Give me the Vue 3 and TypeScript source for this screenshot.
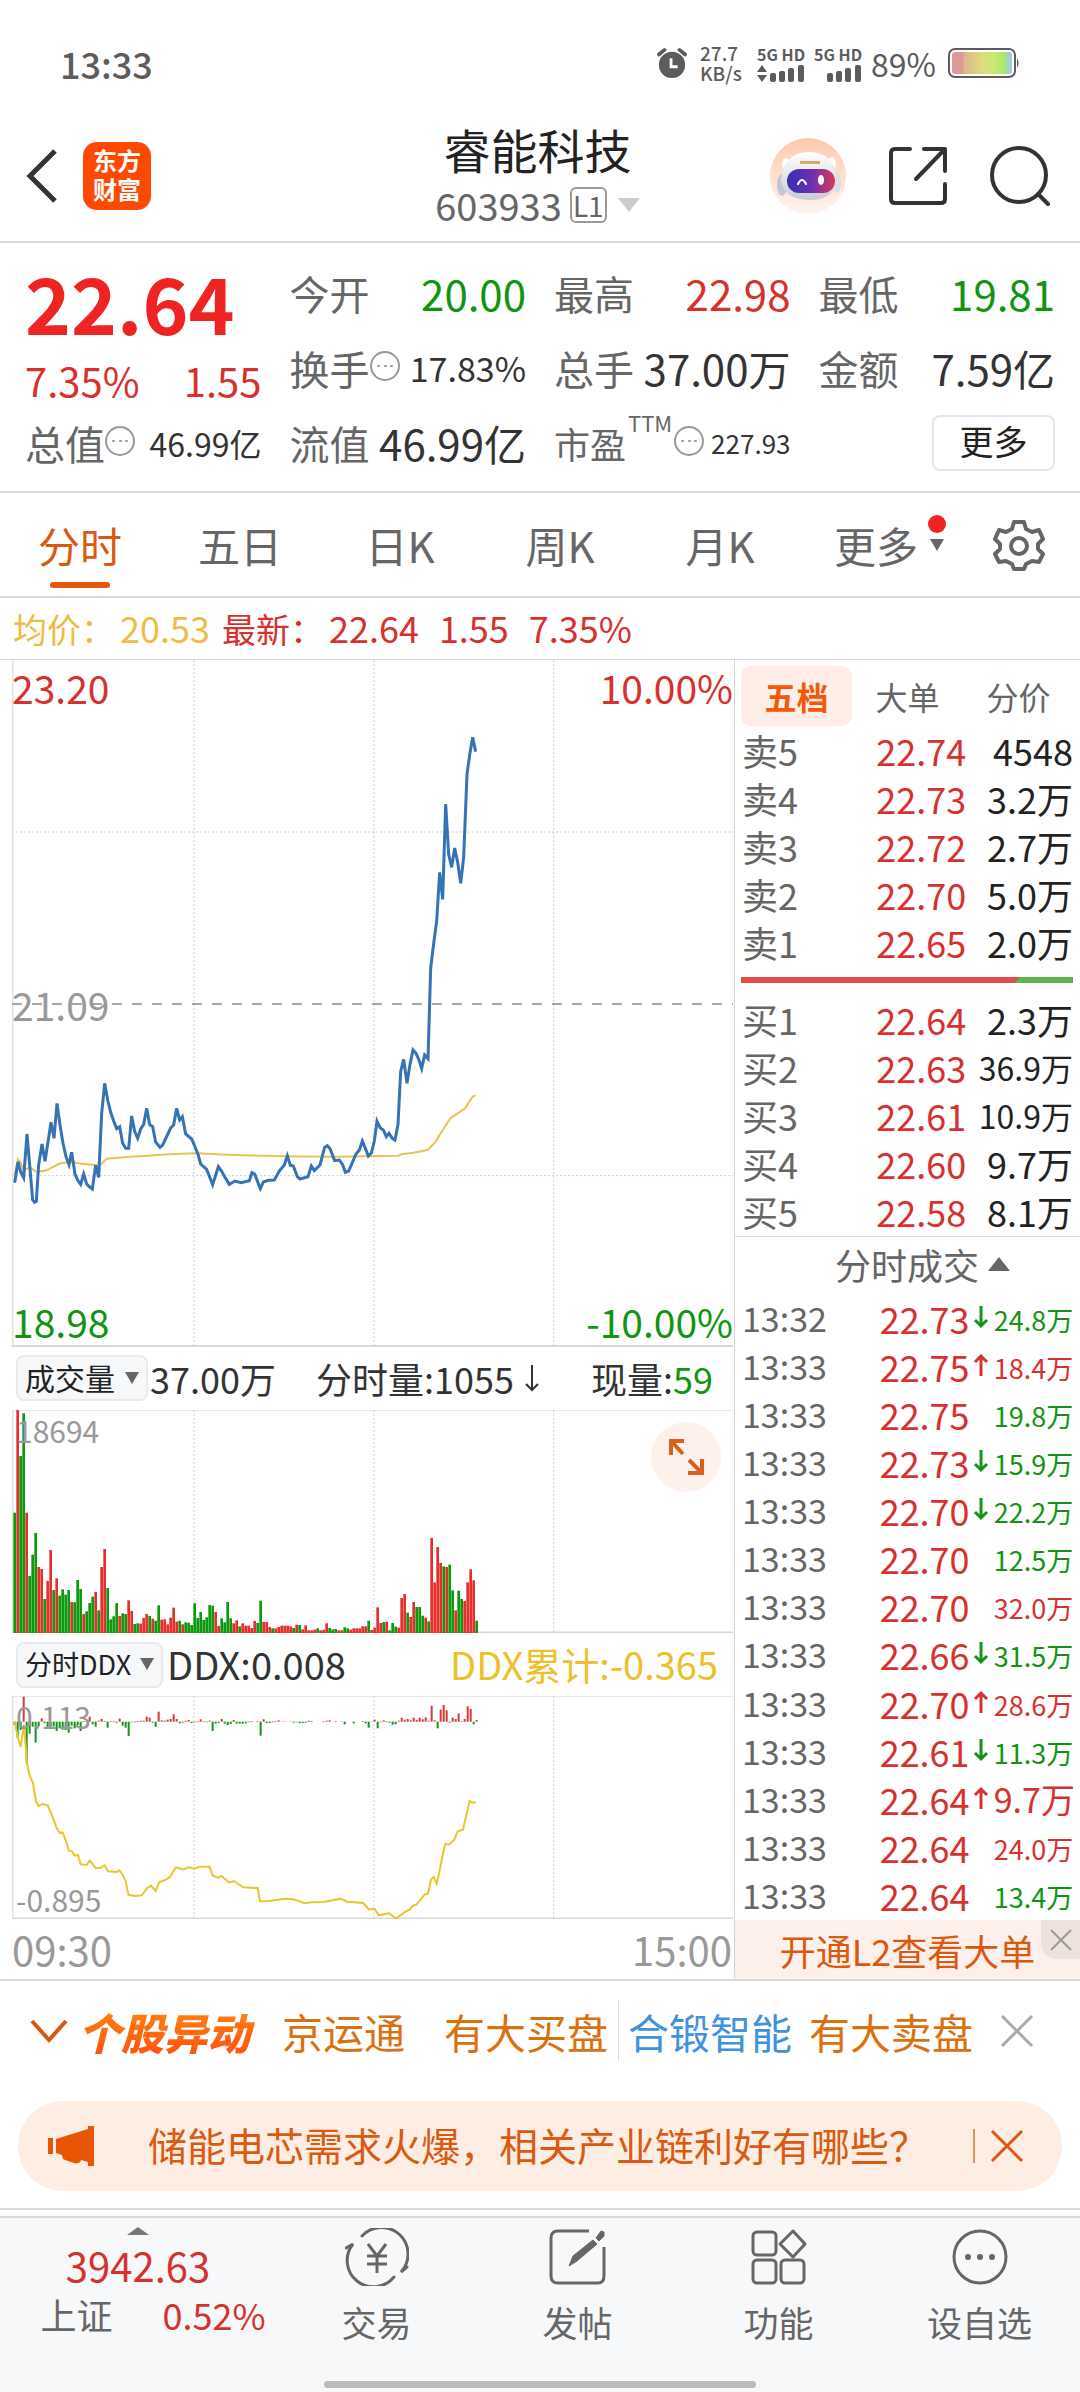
<script setup lang="ts">
import { ref } from 'vue'

type Tone = 'up' | 'down'
interface Level { label: string; price: string; size: string }
interface Trade { time: string; price: string; size: string; tone: Tone; arrow?: Tone }

const periods = ['分时', '五日', '日K', '周K', '月K']
const activePeriod = ref('分时')
const depthTabs = ['五档', '大单', '分价']
const activeDepth = ref('五档')
const volumeIndicator = ref('成交量')
const flowIndicator = ref('分时DDX')

const asks: Level[] = [
  { label: '卖5', price: '22.74', size: '4548' },
  { label: '卖4', price: '22.73', size: '3.2万' },
  { label: '卖3', price: '22.72', size: '2.7万' },
  { label: '卖2', price: '22.70', size: '5.0万' },
  { label: '卖1', price: '22.65', size: '2.0万' },
]
const bids: Level[] = [
  { label: '买1', price: '22.64', size: '2.3万' },
  { label: '买2', price: '22.63', size: '36.9万' },
  { label: '买3', price: '22.61', size: '10.9万' },
  { label: '买4', price: '22.60', size: '9.7万' },
  { label: '买5', price: '22.58', size: '8.1万' },
]
const trades: Trade[] = [
  { time: '13:32', price: '22.73', size: '24.8万', tone: 'down', arrow: 'down' },
  { time: '13:33', price: '22.75', size: '18.4万', tone: 'up', arrow: 'up' },
  { time: '13:33', price: '22.75', size: '19.8万', tone: 'down' },
  { time: '13:33', price: '22.73', size: '15.9万', tone: 'down', arrow: 'down' },
  { time: '13:33', price: '22.70', size: '22.2万', tone: 'down', arrow: 'down' },
  { time: '13:33', price: '22.70', size: '12.5万', tone: 'down' },
  { time: '13:33', price: '22.70', size: '32.0万', tone: 'up' },
  { time: '13:33', price: '22.66', size: '31.5万', tone: 'down', arrow: 'down' },
  { time: '13:33', price: '22.70', size: '28.6万', tone: 'up', arrow: 'up' },
  { time: '13:33', price: '22.61', size: '11.3万', tone: 'down', arrow: 'down' },
  { time: '13:33', price: '22.64', size: '9.7万', tone: 'up', arrow: 'up' },
  { time: '13:33', price: '22.64', size: '24.0万', tone: 'up' },
  { time: '13:33', price: '22.64', size: '13.4万', tone: 'down' },
]

// One minute is 9 chart units wide; the session starts at x = 40.
const priceLine =
  '44,1568 54,1506 62,1535 71,1553 81,1422 98,1620 104,1627 109,1624 116,1515 126,1452 135,1504 144,1446 153,1387 162,1435 171,1330 180,1395 189,1450 198,1490 207,1514 215,1477 225,1542 234,1562 242,1573 251,1542 260,1572 269,1581 277,1587 287,1516 296,1552 305,1360 314,1270 323,1320 332,1357 341,1383 350,1406 359,1400 368,1450 377,1465 386,1465 395,1368 404,1414 413,1435 422,1407 431,1393 440,1345 449,1394 458,1400 467,1446 480,1462 488,1455 512,1404 521,1395 530,1345 539,1380 547,1370 557,1422 575,1437 584,1458 593,1480 602,1512 620,1528 638,1574 655,1520 665,1534 674,1550 688,1573 705,1563 723,1568 748,1562 756,1538 764,1542 781,1586 790,1566 805,1561 823,1560 838,1533 853,1515 862,1487 871,1516 880,1518 892,1550 900,1557 924,1550 934,1518 943,1532 960,1515 974,1462 982,1457 990,1466 1004,1502 1018,1500 1028,1514 1036,1537 1046,1533 1068,1482 1078,1470 1087,1443 1096,1465 1105,1488 1114,1479 1123,1443 1131,1384 1140,1403 1150,1410 1159,1430 1167,1420 1177,1435 1185,1440 1194,1393 1202,1235 1211,1198 1221,1270 1230,1213 1239,1170 1248,1180 1257,1200 1265,1226 1274,1185 1284,1196 1292,925 1301,850 1310,784 1319,637 1328,718 1337,432 1346,583 1355,622 1364,564 1373,607 1382,670 1391,592 1401,343 1409,285 1418,232 1427,275'
const averageLine =
  '44,1545 54,1497 62,1508 71,1530 90,1522 110,1536 140,1531 180,1510 215,1507 245,1511 290,1516 304,1512 320,1496 380,1491 440,1487 520,1482 590,1480 700,1485 850,1489 1000,1490 1140,1488 1195,1487 1205,1483 1240,1478 1283,1470 1305,1447 1350,1376 1395,1345 1418,1310 1427,1306'
const flowLine =
  '44,77 54,126 62,153 72,86 81,201 89,239 99,261 108,316 116,331 127,324 143,328 153,351 161,371 170,396 180,411 188,409 198,436 207,464 217,467 224,479 234,477 242,505 260,507 269,493 287,517 300,516 314,508 324,526 351,528 358,523 368,536 377,556 385,596 403,600 425,598 442,576 453,569 467,585 477,559 495,552 510,543 527,514 549,520 566,514 583,518 600,512 629,512 638,539 655,545 665,540 688,560 701,555 730,574 773,576 780,616 807,615 856,608 881,610 915,622 934,619 970,618 1022,608 1041,617 1090,621 1107,641 1123,638 1137,658 1166,652 1189,667 1218,646 1229,641 1239,629 1249,626 1274,596 1284,593 1293,551 1301,543 1310,563 1319,524 1328,476 1336,444 1346,446 1363,431 1373,406 1389,401 1400,353 1409,315 1419,321 1427,318'

// Volume per minute: positive closed up, negative closed down.
const volumes = [
  -361, 669, -531, -659, 361, -171, -235, -300, 198, 192, -102, 156, 249, -129, 164, -112, -131, -115, -129, 93,
  -92, -159, -132, 57, -65, -90, -109, 123, -68, 198, 252, -135, -41, -50, -90, 51, -59, -57, 98, 66,
  -27, -29, 28, 45, 57, -51, 43, -37, -83, 40, 41, 26, 46, 76, 34, -37, 26, -32, -31, -24,
  -89, -45, -63, -39, -47, -84, -82, 63, 21, -44, -32, -93, -44, 29, 38, -20, 29, 22, 22, 15,
  36, -30, -97, 33, 33, 18, -14, 14, 18, 22, 22, 22, 20, -15, 25, -24, 11, 23, 8, 8,
  10, -14, 8, 10, 29, -15, -11, -12, 8, 8, -17, -14, 10, 14, 14, 14, 20, 20, -37, 9,
  16, 77, 30, -33, 34, -8, -30, -19, 16, 105, 117, -61, 48, 93, -78, -78, -52, 46, -35, 285,
  152, 258, 210, -200, 198, -205, -128, 68, -127, -102, 96, 152, 191, 158, -37,
]
const flows = [
  -10, -50, -25, 75, -125, -36, -15, -63, -14, 10, -4, -22, -22, -14, -28, -20, -24, -25, -33, -12,
  -20, -10, -28, 2, 2, 15, -8, -15, 3, 8, 2, -18, 2, 2, -3, 9, -12, -18, -43, -2,
  -2, 2, 3, 3, 15, 12, -3, -15, 30, 4, 3, 6, 8, 22, 8, -5, -3, 3, 5, -4,
  -2, 2, 7, 2, -2, 3, -28, -6, -4, 8, -6, -10, -7, 5, -6, -6, -6, -5, -2, 2,
  0, 2, -42, 7, -4, -4, -2, 2, 4, 1, 1, 0, 1, -3, -2, -5, -4, -3, 3, 2,
  0, 0, 0, 2, 3, 4, 0, 2, 0, 1, -8, 0, 0, -5, 0, 0, 2, -5, -18, 1,
  6, -20, -2, 4, 2, -3, -9, -8, 3, 12, 6, 8, 4, 12, 5, 12, 7, 13, 3, 48,
  4, -20, 36, 50, 34, -3, 12, 8, 25, 2, 8, 46, 38, -8, 5,
]
const gridColumns = [582, 1122, 1661]
</script>

<template>
  <div class="page">
    <div class="status">
      <span class="clock">13:33</span>
      <div class="status-right">
        <svg class="alarm" viewBox="0 0 32 34">
          <circle cx="16" cy="19" r="14" fill="#5c5c5c" />
          <path d="M2 8 8 3M30 8 24 3" stroke="#5c5c5c" stroke-width="4" stroke-linecap="round" />
          <path d="M15 12v9h7" fill="none" stroke="#fff" stroke-width="3" />
        </svg>
        <div class="net"><span>27.7</span><span>KB/s</span></div>
        <div class="sim">
          <span>5G HD</span>
          <svg viewBox="0 0 48 17" fill="#5c5c5c"><path d="M0 7 5 0l5 7zM0 10h10l-5 7z" /><rect x="13" y="8" width="6" height="9" rx="2" /><rect x="22" y="6" width="6" height="11" rx="2" /><rect x="31" y="3" width="6" height="14" rx="2" /><rect x="41" y="0" width="6" height="17" rx="2" /></svg>
        </div>
        <div class="sim">
          <span>5G HD</span>
          <svg viewBox="0 0 48 17" fill="#5c5c5c"><rect x="13" y="8" width="6" height="9" rx="2" /><rect x="22" y="6" width="6" height="11" rx="2" /><rect x="31" y="3" width="6" height="14" rx="2" /><rect x="41" y="0" width="6" height="17" rx="2" /></svg>
        </div>
        <span class="percent">89%</span>
        <svg class="battery" viewBox="0 0 72 30">
          <defs>
            <linearGradient id="charge"><stop offset="0" stop-color="#dd9aa0" /><stop offset=".18" stop-color="#dd9a96" /><stop offset=".2" stop-color="#dcb78e" /><stop offset=".5" stop-color="#dfdc7c" /><stop offset=".7" stop-color="#cbea72" /><stop offset=".9" stop-color="#a5e673" /><stop offset=".92" stop-color="#a5cfcb" /><stop offset="1" stop-color="#a9c8d8" /></linearGradient>
          </defs>
          <rect x="1" y="1" width="66" height="28" rx="6" fill="#fff" stroke="#5c5c5c" stroke-width="2" />
          <rect x="4" y="4" width="60" height="22" rx="3" fill="url(#charge)" />
          <path d="M69 10q3 5 0 10z" fill="#5c5c5c" />
        </svg>
      </div>
    </div>

    <header class="header">
      <div class="header-side">
        <button class="icon-button" aria-label="返回">
          <svg class="back" viewBox="0 0 34 56"><path d="M30 3 5 28l25 25" fill="none" stroke="#333" stroke-width="5" /></svg>
        </button>
        <a class="logo" href="#"><span>东方</span><span>财富</span></a>
      </div>
      <div class="title">
        <h1>睿能科技</h1>
        <button class="code">603933<span class="level">L1</span><svg viewBox="0 0 22 14"><path d="M0 0h22L11 14z" fill="#ccc" /></svg></button>
      </div>
      <div class="header-side header-tools">
        <button class="icon-button" aria-label="智能助手">
          <svg class="robot" viewBox="0 0 76 76">
            <defs>
              <linearGradient id="halo" x2="0" y2="1"><stop offset="0" stop-color="#fdc9ae" /><stop offset="1" stop-color="#fff4ef" /></linearGradient>
              <linearGradient id="visor"><stop offset="0" stop-color="#3a2fae" /><stop offset=".5" stop-color="#6a2fb5" /><stop offset="1" stop-color="#d63a58" /></linearGradient>
              <linearGradient id="shell" x2="0" y2="1"><stop offset="0" stop-color="#fff" /><stop offset="1" stop-color="#c9cbd6" /></linearGradient>
            </defs>
            <circle cx="38" cy="38" r="38" fill="url(#halo)" />
            <path d="M12 28q0-8 4-8l8 4-8 10zM66 28q0-9-4-9l-8 5 8 10z" fill="#fff" />
            <ellipse cx="12" cy="47" rx="5" ry="11" fill="#c3c5d2" />
            <ellipse cx="67" cy="45" rx="4" ry="10" fill="#dcdde6" />
            <path d="M11 42q3-28 28-28t28 27q-2 21-28 21-26-1-28-20" fill="url(#shell)" />
            <path d="M30 23h20v3H30z" fill="#dfa26a" />
            <rect x="17" y="31" width="48" height="24" rx="12" fill="url(#visor)" />
            <path d="M28 46q4-8 8 0" fill="none" stroke="#fff" stroke-width="2" stroke-linecap="round" />
            <ellipse cx="51" cy="42" rx="3" ry="5" fill="#fff" />
          </svg>
        </button>
        <button class="icon-button" aria-label="分享">
          <svg class="share" viewBox="0 0 60 60" fill="none" stroke="#333" stroke-width="4"><path d="M22 3H7q-4 0-4 4v46q0 4 4 4h46q4 0 4-4V38M36 3h21v22M56 4 28 33" stroke-linecap="round" stroke-linejoin="round" /></svg>
        </button>
        <button class="icon-button" aria-label="搜索">
          <svg class="search" viewBox="0 0 60 60" fill="none" stroke="#333" stroke-width="4"><circle cx="29" cy="29" r="27" /><path d="m48 48 10 10" stroke-linecap="round" /></svg>
        </button>
      </div>
    </header>

    <section class="quote">
      <div class="last">
        <strong class="up">22.64</strong>
        <div class="pair up"><span>7.35%</span><span>1.55</span></div>
      </div>
      <div class="cell"><span class="name">今开</span><span class="value down">20.00</span></div>
      <div class="cell"><span class="name">最高</span><span class="value up">22.98</span></div>
      <div class="cell"><span class="name">最低</span><span class="value down">19.81</span></div>
      <div class="cell"><span class="name">换手</span><svg class="info" viewBox="0 0 30 30"><circle cx="15" cy="15" r="14" /><path d="M8 15h1M15 15h1M21 15h1" /></svg><span class="value rate">17.83%</span></div>
      <div class="cell"><span class="name">总手</span><span class="value">37.00万</span></div>
      <div class="cell"><span class="name">金额</span><span class="value">7.59亿</span></div>
      <div class="cell"><span class="name">总值</span><svg class="info" viewBox="0 0 30 30"><circle cx="15" cy="15" r="14" /><path d="M8 15h1M15 15h1M21 15h1" /></svg><span class="value medium">46.99亿</span></div>
      <div class="cell"><span class="name">流值</span><span class="value">46.99亿</span></div>
      <div class="cell"><span class="name narrow">市盈</span><sup>TTM</sup><svg class="info" viewBox="0 0 30 30"><circle cx="15" cy="15" r="14" /><path d="M8 15h1M15 15h1M21 15h1" /></svg><span class="value small">227.93</span></div>
      <div class="cell"><button class="more">更多</button></div>
    </section>

    <nav class="periods">
      <button v-for="p in periods" :key="p" :class="{ active: p === activePeriod }" @click="activePeriod = p">{{ p }}</button>
      <button class="period-more">更多<span class="dot"></span><svg viewBox="0 0 14 12"><path d="M0 0h14L7 12z" fill="#666" /></svg></button>
      <button class="settings" aria-label="设置">
        <svg viewBox="0 0 52 52" fill="none" stroke="#666" stroke-width="4" stroke-linejoin="round"><path d="M21 3h10l2 7 6 3 7-2 4 9-5 5v5l5 5-4 8-7-1-6 3-2 5H21l-2-5-6-3-7 1-4-8 5-5v-5l-5-5 4-9 7 2 6-3z" /><circle cx="26" cy="27" r="8" /></svg>
      </button>
    </nav>

    <div class="summary">
      <span class="avg"><b>均价：</b>20.53</span>
      <span class="up"><b>最新：</b>22.64</span>
      <span class="up">1.55</span>
      <span class="up">7.35%</span>
    </div>

    <main class="board">
      <div class="charts">
        <div class="chart price-chart">
          <svg viewBox="36 0 2163 2061" preserveAspectRatio="none" fill="none">
            <path d="M38 0v2061" stroke="#e2e2e2" stroke-width="5" />
            <path v-for="x in gridColumns" :key="x" :d="`M${x} 0v2061`" class="grid" />
            <path d="M36 516h2163M36 1547h2163" class="grid" />
            <path d="M36 1032h2163" stroke="#8a8a8a" stroke-width="5" stroke-dasharray="30 30" />
            <path d="M36 2058h2163" stroke="#d8d8d8" stroke-width="6" />
            <polyline :points="averageLine" stroke="#eebf55" stroke-width="6" />
            <polyline :points="priceLine" stroke="#3573b5" stroke-width="9" />
          </svg>
          <span class="mark top-left up">23.20</span>
          <span class="mark top-right up">10.00%</span>
          <span class="mark middle-left">21.09</span>
          <span class="mark bottom-left down">18.98</span>
          <span class="mark bottom-right down">-10.00%</span>
        </div>

        <div class="indicator">
          <label class="picker"><select v-model="volumeIndicator" aria-label="副图指标一"><option>成交量</option></select><svg viewBox="0 0 14 12"><path d="M0 0h14L7 12z" fill="#666" /></svg></label>
          <span class="total">37.00万</span>
          <span class="minute">分时量:1055<svg viewBox="0 0 16 28"><path d="M8 1v25M2 20l6 6 6-6" fill="none" stroke="#333" stroke-width="2" /></svg></span>
          <span class="current">现量:<span class="down">59</span></span>
        </div>

        <div class="chart sub-chart">
          <svg viewBox="36 0 2163 669" preserveAspectRatio="none" fill="none">
            <path d="M38 0v669" stroke="#e2e2e2" stroke-width="5" />
            <path d="M36 1h2163" stroke="#e2e2e2" stroke-width="3" />
            <path v-for="x in gridColumns" :key="x" :d="`M${x} 0v669`" class="grid" />
            <path d="M36 667h2163" stroke="#d8d8d8" stroke-width="5" />
            <rect v-for="(v, i) in volumes" :key="i" :x="40 + i * 9" :y="669 - Math.abs(v)" width="8" :height="Math.abs(v)" :fill="v > 0 ? '#e62e2a' : '#0c9a0c'" />
          </svg>
          <span class="scale scale-top">18694</span>
          <button class="expand" aria-label="全屏">
            <svg viewBox="0 0 70 70" fill="none" stroke="#d9601c" stroke-width="4"><path d="M33 19H20v14M21 20l11 12M51 37v14H37M50 50 38 38" /></svg>
          </button>
        </div>

        <div class="indicator">
          <label class="picker wide"><select v-model="flowIndicator" aria-label="副图指标二"><option>分时DDX</option></select><svg viewBox="0 0 14 12"><path d="M0 0h14L7 12z" fill="#666" /></svg></label>
          <span class="ddx">DDX:0.008</span>
          <span class="ddx-sum">DDX累计:-0.365</span>
        </div>

        <div class="chart sub-chart">
          <svg viewBox="36 0 2163 669" preserveAspectRatio="none" fill="none">
            <path d="M38 0v669" stroke="#e2e2e2" stroke-width="5" />
            <path d="M36 1h2163" stroke="#e2e2e2" stroke-width="3" />
            <path v-for="x in gridColumns" :key="x" :d="`M${x} 0v669`" class="grid" />
            <path d="M36 667h2163" stroke="#d8d8d8" stroke-width="5" />
            <rect v-for="(v, i) in flows" :key="i" :x="41 + i * 9" :y="v > 0 ? 77 - v : 77" width="6" :height="Math.abs(v)" :fill="v > 0 ? '#d53a36' : '#159415'" />
            <polyline :points="flowLine" stroke="#e9c62c" stroke-width="6" />
          </svg>
          <span class="scale scale-top">0.113</span>
          <span class="scale scale-bottom">-0.895</span>
        </div>

        <div class="hours"><span>09:30</span><span>15:00</span></div>
      </div>

      <aside class="depth">
        <div class="depth-tabs">
          <button v-for="t in depthTabs" :key="t" :class="{ active: t === activeDepth }" @click="activeDepth = t">{{ t }}</button>
        </div>
        <table class="levels">
          <tbody><tr v-for="l in asks" :key="l.label"><th>{{ l.label }}</th><td class="up">{{ l.price }}</td><td class="size">{{ l.size }}</td></tr></tbody>
        </table>
        <div class="ratio"><i class="ratio-buy"></i><i class="ratio-sell"></i></div>
        <table class="levels">
          <tbody><tr v-for="l in bids" :key="l.label"><th>{{ l.label }}</th><td class="up">{{ l.price }}</td><td class="size" :class="{ long: l.size.length > 4 }">{{ l.size }}</td></tr></tbody>
        </table>
        <button class="trades-head">分时成交<svg viewBox="0 0 22 14"><path d="M0 14h22L11 0z" fill="#666" /></svg></button>
        <table class="trades">
          <tbody>
            <tr v-for="(t, i) in trades" :key="i">
              <th>{{ t.time }}</th>
              <td class="up">{{ t.price }}</td>
              <td class="arrow"><svg v-if="t.arrow" :class="t.arrow" viewBox="0 0 16 24"><path :d="t.arrow === 'up' ? 'M8 23V3M2 9l6-6 6 6' : 'M8 1v20M2 15l6 6 6-6'" /></svg></td>
              <td class="size" :class="[t.tone, { large: t.size.length < 5 }]">{{ t.size }}</td>
            </tr>
          </tbody>
        </table>
        <div class="promo">
          <a href="#">开通L2查看大单</a>
          <button aria-label="关闭推广"><svg viewBox="0 0 24 24"><path d="m2 2 20 20M22 2 2 22" fill="none" stroke="#999" stroke-width="2" /></svg></button>
        </div>
      </aside>
    </main>

    <section class="movers">
      <svg class="chevron" viewBox="0 0 38 24"><path d="m2 2 17 19L36 2" fill="none" stroke="#d4590f" stroke-width="4" /></svg>
      <strong>个股异动</strong>
      <a class="stock-a" href="#">京运通</a>
      <span class="event">有大买盘</span>
      <a class="stock-b" href="#">合锻智能</a>
      <span class="event-b">有大卖盘</span>
      <button class="icon-button" aria-label="关闭异动"><svg class="close" viewBox="0 0 34 34"><path d="m2 2 30 30M32 2 2 32" fill="none" stroke="#aaa" stroke-width="3" /></svg></button>
    </section>

    <section class="notice">
      <svg class="horn" viewBox="0 0 48 40" fill="#e85505"><path d="M1 12h5v16H1zM9 13 41 3V0h6v40h-6v-4l-7-2q-1 4-7 3l-9-3q-3-1-3-5l-6-2z" /></svg>
      <a href="#">储能电芯需求火爆，相关产业链利好有哪些？</a>
      <button class="icon-button" aria-label="关闭公告"><svg class="close" viewBox="0 0 34 34"><path d="m2 2 30 30M32 2 2 32" fill="none" stroke="#e0560e" stroke-width="3" /></svg></button>
    </section>

    <footer class="footer">
      <div class="tabbar">
        <a class="index" href="#">
          <svg viewBox="0 0 22 8"><path d="M0 8h22L11 0z" fill="#777" /></svg>
          <span class="up points">3942.63</span>
          <span class="index-row"><span>上证</span><span class="up">0.52%</span></span>
        </a>
        <a href="#">
          <svg viewBox="0 0 64 58" fill="none" stroke="#666" stroke-width="3"><path d="M17 8a26 26 0 0 1 39 36l6-5M49 49A26 26 0 0 1 8 16l-7 4" stroke-linecap="round" /><path d="m23 16 9 12 9-12M32 28v17M22 28h20M22 36h20" /></svg>
          <span>交易</span>
        </a>
        <a href="#">
          <svg viewBox="0 0 64 58" fill="none" stroke="#666" stroke-width="3"><path d="M43 3H12q-7 0-7 7v38q0 7 7 7h40q6 0 6-7V19" /><path d="m50 10 5-7 3 1v4l-5 5zM23 38l4-10 20-16 4 4-20 17z" fill="#666" stroke-width="1" /></svg>
          <span>发帖</span>
        </a>
        <a href="#">
          <svg viewBox="0 0 64 58" fill="none" stroke="#666" stroke-width="3"><rect x="6" y="4" width="23" height="23" rx="4" /><rect x="6" y="32" width="23" height="23" rx="4" /><rect x="34" y="32" width="23" height="23" rx="4" /><path d="m46 3 12 13-12 13-13-13z" stroke-linejoin="round" /></svg>
          <span>功能</span>
        </a>
        <a href="#">
          <svg viewBox="0 0 64 58" fill="none" stroke="#666" stroke-width="3"><circle cx="32" cy="29" r="26" /><g fill="#666" stroke="none"><circle cx="20" cy="29" r="3" /><circle cx="32" cy="29" r="3" /><circle cx="44" cy="29" r="3" /></g></svg>
          <span>设自选</span>
        </a>
      </div>
      <div class="home"></div>
    </footer>
  </div>
</template>

<style>
body { margin: 0; background: #fff; }
</style>

<style scoped>
* { box-sizing: border-box; }
.page { font-family: "Noto Sans CJK SC", "Noto Sans", sans-serif; color: #333; background: #fff; line-height: 1; }
button { font: inherit; color: inherit; background: none; border: 0; padding: 0; cursor: pointer; }
a { color: inherit; text-decoration: none; }
svg { display: block; flex: none; }
.up { color: #d7312e; }
.down { color: #129412; }
.icon-button { display: block; }

.status { display: flex; justify-content: space-between; align-items: center; height: 110px; padding: 16px 60px 0; color: #5c5c5c; }
.clock { font-size: 36px; font-weight: 500; }
.status-right { display: flex; align-items: center; }
.alarm { width: 30px; height: 32px; margin-right: 13px; }
.net { display: flex; flex-direction: column; width: 57px; font-size: 19px; line-height: 20px; font-weight: 500; }
.sim { display: flex; flex-direction: column; gap: 2px; width: 57px; font-size: 16px; font-weight: 700; line-height: 18px; white-space: nowrap; }
.sim svg { width: 48px; height: 17px; }
.percent { font-size: 32px; margin-right: 12px; }
.battery { width: 72px; height: 30px; }

.header { display: grid; grid-template-columns: 1fr auto 1fr; align-items: center; height: 133px; padding: 0 30px 0 25px; border-bottom: 2px solid #d9d9d9; }
.header-side { display: flex; align-items: center; gap: 24px; }
.header-tools { justify-content: flex-end; gap: 42px; }
.back { width: 34px; height: 56px; }
.logo { display: grid; align-content: center; justify-items: center; width: 68px; height: 68px; padding-bottom: 3px; border-radius: 14px; background: #fe4a00; color: #fff; font-size: 24px; line-height: 29px; font-weight: 700; }
.title { display: grid; justify-items: center; }
h1 { margin: 0; font-size: 47px; line-height: 58px; font-weight: 400; color: #222; }
.code { display: flex; align-items: center; height: 54px; font-size: 38px; color: #666; }
.level { display: grid; place-items: center; width: 37px; height: 36px; margin: 0 11px 0 8px; border: 2px solid #999; border-radius: 6px; font-size: 28px; }
.code svg { width: 22px; height: 14px; }
.robot { width: 76px; height: 76px; }
.share, .search { width: 60px; height: 60px; }

.quote { display: grid; grid-template-columns: repeat(4, 1fr); grid-template-rows: repeat(3, 75px); column-gap: 28px; height: 250px; padding: 12px 25px 0; border-bottom: 2px solid #d9d9d9; }
.last { grid-row: span 2; display: flex; flex-direction: column; justify-content: space-between; padding: 4px 0 3px; }
.last strong { font-size: 78px; line-height: 84px; font-weight: 700; color: #ee2423; }
.pair { display: flex; justify-content: space-between; font-size: 40px; line-height: 44px; }
.cell { display: flex; align-items: center; white-space: nowrap; }
.name { font-size: 40px; color: #666; }
.narrow { font-size: 36px; }
.value { margin-left: auto; font-size: 42px; }
.rate { font-size: 34px; }
.medium { font-size: 32px; }
.small { font-size: 26px; }
.info { width: 30px; height: 30px; margin-bottom: 4px; fill: none; stroke: #999; stroke-width: 2; stroke-linecap: round; }
sup { align-self: flex-start; margin: 6px 2px 0; font-size: 22px; color: #666; }
.more { width: 123px; height: 56px; margin-left: auto; padding-bottom: 4px; border: 2px solid #e4e7e9; border-radius: 8px; font-size: 34px; color: #222; }

.periods { display: flex; height: 105px; padding-right: 2px; border-bottom: 2px solid #d9d9d9; font-size: 42px; color: #666; }
.periods button { flex: 160; position: relative; display: flex; align-items: center; justify-content: center; }
.periods .active { color: #d9590f; }
.periods .active::after { content: ""; position: absolute; bottom: 8px; width: 60px; height: 6px; border-radius: 3px; background: #e5560a; }
.periods .period-more { flex: 142; gap: 12px; padding-left: 18px; }
.period-more svg { width: 14px; height: 12px; }
.period-more .dot { position: absolute; right: 14px; top: 22px; width: 18px; height: 18px; border-radius: 50%; background: #ee2423; }
.periods .settings { flex: 118; }
.settings svg { width: 52px; height: 52px; }

.summary { display: flex; align-items: center; gap: 20px; height: 62px; padding: 0 0 3px 13px; border-bottom: 1px solid #d9d9d9; font-size: 36px; color: #d7312e; }
.summary b { margin-right: 5px; font-size: 34px; font-weight: 400; }
.summary .avg { color: #eebc45; margin-right: -8px; }

.board { display: grid; grid-template-columns: minmax(0, 735fr) minmax(0, 345fr); border-bottom: 2px solid #d9d9d9; }
.charts { border-right: 1px solid #d4d4d4; }
.chart { position: relative; margin: 0 1px 0 12px; }
.chart > svg { width: 100%; height: 100%; }
.price-chart { height: 687px; }
.sub-chart { height: 223px; }
.grid { stroke: #cfcfcf; stroke-width: 3; stroke-dasharray: 6 6; }
.mark { position: absolute; font-size: 39px; line-height: 44px; }
.top-left { left: 0; top: 5px; }
.top-right { right: 0; top: 5px; }
.middle-left { left: 0; top: 322px; color: #999; }
.bottom-left { left: 0; bottom: 4px; }
.bottom-right { right: 0; bottom: 4px; }
.scale { position: absolute; left: 4px; font-size: 30px; line-height: 32px; color: #999; }
.scale-top { top: 4px; }
.scale-bottom { bottom: 4px; }
.expand { position: absolute; right: 12px; top: 12px; width: 70px; height: 70px; border-radius: 50%; background: #fef0ea; }

.indicator { display: flex; align-items: center; height: 63px; padding: 0 16px 2px; font-size: 36px; white-space: nowrap; }
.picker { position: relative; width: 132px; height: 46px; }
.picker select { appearance: none; width: 100%; height: 100%; padding: 0 0 2px 7px; border: 2px solid #e7eaee; border-radius: 8px; background: #f7f8fa; font: inherit; font-size: 30px; line-height: 40px; color: #222; }
.picker svg { position: absolute; right: 9px; top: 17px; width: 14px; height: 12px; }
.picker.wide { width: 147px; }
.picker.wide select { font-size: 27px; }
.total { margin-left: 2px; }
.minute { display: flex; align-items: center; gap: 10px; margin-left: 40px; }
.minute svg { width: 16px; height: 28px; }
.current { margin: 0 5px 0 auto; }
.ddx { margin-left: 4px; font-size: 38px; }
.ddx-sum { margin-left: auto; font-size: 38px; color: #ecc02b; }
.hours { display: flex; justify-content: space-between; align-items: center; height: 60px; padding: 0 2px 0 12px; font-size: 40px; color: #999; }

.depth { display: flex; flex-direction: column; color: #666; }
.depth-tabs { display: flex; height: 67px; padding: 6px 6px 1px; font-size: 32px; }
.depth-tabs button { flex: 1; padding-bottom: 1px; border-radius: 10px; }
.depth-tabs .active { background: #feeee7; color: #f15a0c; font-weight: 700; }
table { border-collapse: collapse; table-layout: fixed; width: 100%; font-size: 36px; line-height: 46px; }
th, td { height: 48px; padding: 0; font-weight: 400; text-align: right; vertical-align: top; white-space: nowrap; }
th { padding-left: 7px; text-align: left; }
.levels th { width: 34%; }
.levels td.up { width: 33%; }
.levels .size { padding-right: 7px; color: #222; }
.levels .long { font-size: 32px; }
.ratio { display: flex; height: 6px; margin: 10px 7px 13px 6px; background: #5cb54c; }
.ratio-buy { flex: 84; background: #e04b4b; clip-path: polygon(0 0, 100% 0, 98% 100%, 0 100%); }
.ratio-sell { flex: 16; }
.trades-head { display: flex; align-items: center; justify-content: center; gap: 9px; height: 59px; padding: 0 0 5px 30px; border-top: 1px solid #ddd; font-size: 36px; }
.trades-head svg { width: 22px; height: 14px; }
.trades { flex: 1; }
.trades th { width: 34%; font-size: 34px; }
.trades td.up { width: 34%; }
.trades .arrow { width: 7%; }
.arrow svg { width: 16px; height: 24px; margin: 10px 0 0 3px; fill: none; stroke: currentColor; stroke-width: 3; }
.trades td.size { padding: 2px 7px 0 0; font-size: 27px; }
.trades td.large { padding-top: 0; font-size: 34px; }
.promo { display: grid; position: relative; height: 59px; place-items: center; background: #fdf0ea; font-size: 36px; color: #d9590f; }
.promo button { position: absolute; right: 0; top: 0; display: grid; place-items: center; width: 39px; height: 39px; border-radius: 0 0 0 16px; background: #ede2dc; }
.promo svg { width: 24px; height: 24px; }

.movers { display: flex; align-items: center; height: 105px; padding: 0 46px 5px 30px; font-size: 41px; color: #d9710f; white-space: nowrap; }
.chevron { width: 38px; height: 24px; }
.movers strong { padding: 4px 6px 4px 0; margin: 0 26px 0 10px; font-size: 43px; line-height: 50px; font-weight: 900; font-style: italic; background: linear-gradient(#ff8a10, #ff4e10); background-clip: text; color: transparent; }
.event { margin-left: auto; }
.stock-b { display: flex; align-items: center; height: 60px; margin: 0 17px 0 10px; padding-left: 9px; border-left: 1px solid #ddd; color: #3f93dc; }
.event-b { margin-right: 27px; }
.close { width: 34px; height: 34px; }

.notice { display: flex; align-items: center; height: 90px; margin: 15px 18px 17px; padding: 0 38px 0 29px; border-radius: 45px; background: #fdede3; font-size: 39px; color: #d95a10; white-space: nowrap; }
.horn { width: 48px; height: 40px; }
.notice a { flex: 1; margin-left: 53px; padding-bottom: 4px; }
.notice button { padding-left: 15px; border-left: 2px solid #e0905f; }

.footer { border-top: 2px solid #d9d9d9; padding-top: 6px; }
.tabbar { display: flex; height: 165px; border-top: 2px solid #d9d9d9; background: #f7f8fa; font-size: 35px; color: #666; }
.tabbar a { flex: 201; display: flex; flex-direction: column; align-items: center; padding-top: 10px; gap: 18px; }
.tabbar a > svg { width: 64px; height: 58px; }
.tabbar .index { flex: 276; padding-top: 9px; gap: 0; }
.tabbar .index > svg { width: 22px; height: 8px; }
.points { margin-top: 6px; font-size: 40px; line-height: 48px; }
.index-row { display: flex; gap: 50px; padding-left: 30px; font-size: 36px; line-height: 50px; }
.home { display: grid; height: 11px; background: #f7f8fa; justify-items: center; }
.home::before { content: ""; width: 40%; height: 7px; border-radius: 4px; background: #bbb; }
</style>
